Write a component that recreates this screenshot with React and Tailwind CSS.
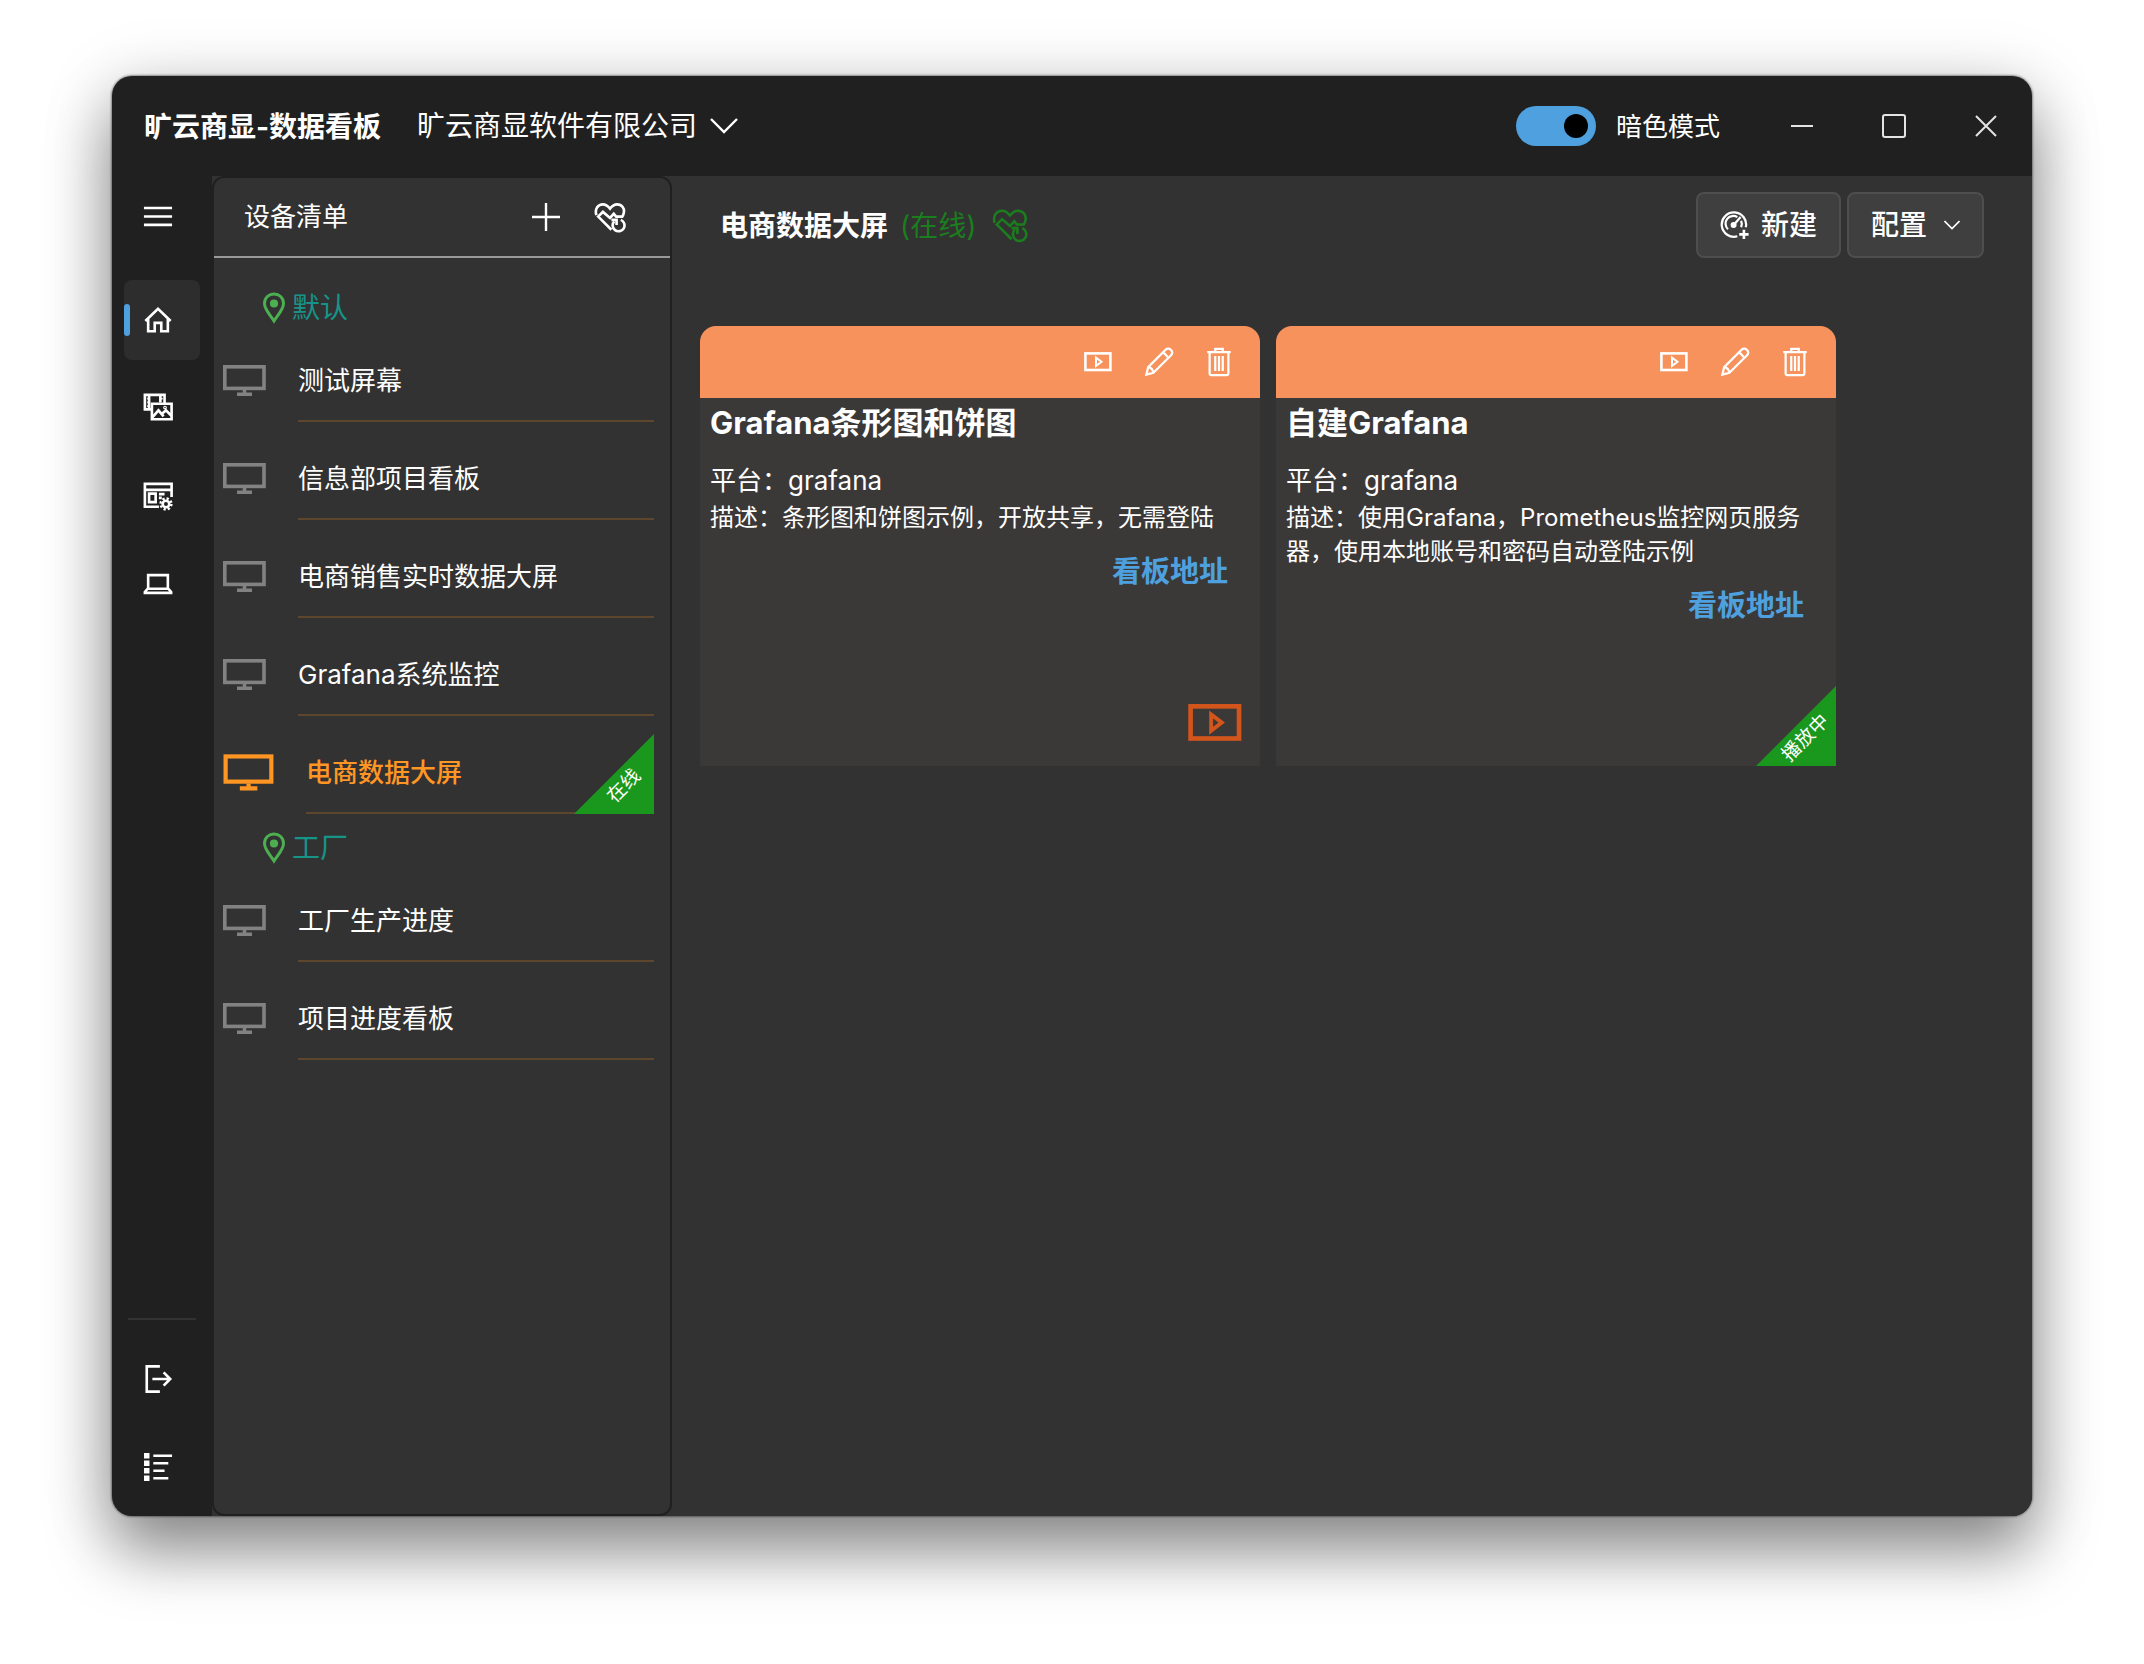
import React, { useState } from 'react';

const groups = [
    {
        name: '默认',
        devices: [
            { id: 1, name: '测试屏幕' },
            { id: 2, name: '信息部项目看板' },
            { id: 3, name: '电商销售实时数据大屏' },
            { id: 4, name: 'Grafana系统监控' },
            { id: 5, name: '电商数据大屏', online: true },
        ],
    },
    {
        name: '工厂',
        devices: [
            { id: 6, name: '工厂生产进度' },
            { id: 7, name: '项目进度看板' },
        ],
    },
];

const boards = [
    { id: 1, title: 'Grafana条形图和饼图', platform: 'grafana', desc: '条形图和饼图示例，开放共享，无需登陆', playing: false },
    { id: 2, title: '自建Grafana', platform: 'grafana', desc: '使用Grafana，Prometheus监控网页服务器，使用本地账号和密码自动登陆示例', playing: true },
];

const App = () => {
    const [dark, setDark] = useState(true);
    const [selected, setSelected] = useState(5);

    return (
        <div lang="zh-CN" className="min-h-screen w-full flex flex-col bg-white px-28 pt-[76px] pb-[148px] text-white font-['Inter','Noto_Sans_CJK_SC',sans-serif]">
            <div className="flex-1 flex flex-col rounded-[20px] overflow-hidden bg-[#202020] shadow-[0_0_2px_1px_rgba(0,0,0,0.4),0_36px_64px_rgba(0,0,0,0.4),0_10px_70px_rgba(0,0,0,0.18)]">
                <TitleBar dark={dark} onToggle={() => setDark(!dark)} />
                <div className="flex-1 flex">
                    <NavRail />
                    <DevicePanel selected={selected} onSelect={setSelected} />
                    <Dashboard />
                </div>
            </div>
        </div>
    );
};

const TitleBar = ({ dark, onToggle }) => (
    <header className="h-[100px] shrink-0 flex items-center pl-8">
        <h1 className="pt-[2px] text-[28px] leading-9 font-bold">旷云商显-数据看板</h1>
        <label className="ml-9 flex items-center gap-[10px]">
            <select aria-label="公司" className="appearance-none bg-transparent text-[28px] leading-9 outline-none">
                <option>旷云商显软件有限公司</option>
            </select>
            <svg className="w-8 h-8" viewBox="0 0 32 32" fill="none" stroke="currentColor" strokeWidth="2.4">
                <path d="M3 9 L16 22 L29 9" />
            </svg>
        </label>

        <div className="ml-auto flex items-center">
            <label className="flex items-center gap-5 text-[26px] leading-9">
                <input
                    type="checkbox"
                    role="switch"
                    checked={dark}
                    onChange={onToggle}
                    className="appearance-none w-20 h-10 p-2 rounded-full bg-[#4ea0df] flex justify-start checked:justify-end before:block before:w-6 before:h-6 before:rounded-full before:bg-black"
                />
                <span className="pt-[2px]">暗色模式</span>
            </label>
            <div className="ml-9 flex">
                <WindowButton label="最小化"><path d="M5 16 H27" /></WindowButton>
                <WindowButton label="最大化"><rect x="5" y="5" width="22" height="22" rx="2" /></WindowButton>
                <WindowButton label="关闭"><path d="M6 6 L26 26 M26 6 L6 26" /></WindowButton>
            </div>
        </div>
    </header>
);

const WindowButton = ({ label, children }) => (
    <button aria-label={label} className="w-[92px] h-[100px] flex items-center justify-center">
        <svg className="w-8 h-8" viewBox="0 0 32 32" fill="none" stroke="#e4e4e4" strokeWidth="2">{children}</svg>
    </button>
);

const NavRail = () => (
    <nav className="w-[100px] shrink-0 flex flex-col px-3 pb-[9px]">
        <NavButton label="菜单">
            <path d="M1 7.5 H31 M1 16.5 H31 M1 25.5 H31" />
        </NavButton>
        <div className="mt-6 flex flex-col gap-2">
            <NavButton label="首页" active>
                <path d="M2.5 17 L16 4 L29.5 17 M5.5 14.5 V28 H12.5 V19 H19.5 V28 H26.5 V14.5" />
            </NavButton>
            <NavButton label="素材">
                <path d="M9 17.5 H2 V2 H23 V11 M6.5 2 V17 M18.5 2 V10" />
                <path d="M4.5 6 H6 M4.5 10 H6 M4.5 14 H6 M19 6 H21" strokeWidth="2" />
                <path d="M9.5 11.5 H30.5 V28 H9.5 Z M10 26 L16.5 18.5 L22 25 M20 22.5 L24.5 18.5 L30 24" />
                <circle cx="23.5" cy="15.5" r="0.6" />
            </NavButton>
            <NavButton label="网页">
                <path d="M17 27.5 H2 V3 H30.5 V17 M2 9.5 H30 M6.5 13.5 H13.5 V22.5 H6.5 Z M17 14 H23 M17 18 H20" />
                <circle cx="24.5" cy="24.5" r="3.5" strokeWidth="2.8" />
                <circle cx="24.5" cy="24.5" r="5.8" strokeWidth="2.6" strokeDasharray="2.4 2.15" />
            </NavButton>
            <NavButton label="设备">
                <path d="M5.5 21 V6.5 H26.5 V21 M5 21 H27 L30 24.5 V25.5 H2 V24.5 Z" />
            </NavButton>
        </div>
        <div className="mt-auto flex flex-col">
            <hr className="mx-1 mb-[19px] border-0 h-[2px] bg-[#323232]" />
            <div className="flex flex-col gap-2">
                <NavButton label="退出">
                    <path d="M18 2.5 H4 V29.5 H18 M10 16 H29 M22 9 L29 16 L22 23" />
                </NavButton>
                <NavButton label="列表">
                    <path d="M11 4 H31 M11 12 H27 M11 20 H23 M11 28 H27" />
                    <path d="M2.5 2.5 H5.5 V5.5 H2.5 Z M2.5 10.5 H5.5 V13.5 H2.5 Z M2.5 18.5 H5.5 V21.5 H2.5 Z M2.5 26.5 H5.5 V29.5 H2.5 Z" />
                </NavButton>
            </div>
        </div>
    </nav>
);

const NavButton = ({ label, active, children }) => (
    <button
        aria-label={label}
        className={`h-20 w-[76px] flex items-center rounded-lg ${active ? 'bg-[#2d2d2d]' : ''}`}
    >
        <span className={`w-[6px] h-8 rounded-full ${active ? 'bg-[#4ea0df]' : ''}`} />
        <svg className="ml-[13px] w-[30px] h-[30px]" viewBox="0 0 32 32" fill="none" stroke="currentColor" strokeWidth="2.8">
            {children}
        </svg>
    </button>
);

const DevicePanel = ({ selected, onSelect }) => (
    <aside className="w-[460px] shrink-0 bg-[#323232]">
        <div className="h-full flex flex-col rounded-xl border-2 border-[#202020]">
            <div className="h-20 flex items-center pl-[30px] pr-11 border-b-2 border-[#999999]">
                <h2 className="text-[26px] leading-9">设备清单</h2>
                <button aria-label="添加" className="ml-auto">
                    <svg className="w-8 h-8" viewBox="0 0 32 32" stroke="currentColor" strokeWidth="2.4">
                        <path d="M16 2 V30 M2 16 H30" />
                    </svg>
                </button>
                <button aria-label="刷新状态" className="ml-8 pt-[2px]"><HeartIcon className="w-8 h-8" strokeWidth="2.8" /></button>
            </div>
            <div className="pt-4 pl-[6px] pr-4">
                {groups.map((group) => (
                    <section key={group.name}>
                        <h3 className="h-[66px] pt-[2px] flex items-center gap-[6px] pl-[42px] text-[28px] leading-9 text-[#179488]">
                            <PinIcon />
                            {group.name}
                        </h3>
                        <ul className="flex flex-col gap-4">
                            {group.devices.map((device) => (
                                <DeviceRow
                                    key={device.id}
                                    device={device}
                                    active={device.id === selected}
                                    onClick={() => onSelect(device.id)}
                                />
                            ))}
                        </ul>
                    </section>
                ))}
            </div>
        </div>
    </aside>
);

const DeviceRow = ({ device, active, onClick }) => (
    <li className="relative">
        <button onClick={onClick} className="w-full flex items-center gap-[30px] text-left text-[26px] leading-9">
            <svg
                className={`shrink-0 ${active ? 'w-14 h-14 text-[#ff9624]' : 'w-12 h-12 text-[#828282]'}`}
                viewBox="0 0 48 48"
                fill="none"
                stroke="currentColor"
                strokeWidth="3.6"
            >
                <rect x="4.8" y="9.8" width="39.2" height="21.6" />
                <path d="M24.5 33 V36 M17 37.2 H32" />
            </svg>
            <span className={`flex-1 h-[82px] pt-[2px] flex items-center border-b-2 border-[#5c472c] ${active ? 'text-[#ff9624] font-medium' : ''}`}>
                {device.name}
            </span>
        </button>
        {device.online && <Ribbon text="在线" />}
    </li>
);

// green corner with diagonal text
const Ribbon = ({ text }) => (
    <div className="absolute right-0 bottom-0 w-20 h-20 pl-5 pt-6 flex items-center justify-center">
        <svg className="absolute inset-0 w-full h-full" viewBox="0 0 80 80" fill="#19981d">
            <path d="M80 0 V80 H0 Z" />
        </svg>
        <span className="relative -rotate-45 text-[19px] leading-5 whitespace-nowrap">{text}</span>
    </div>
);

const Dashboard = () => (
    <main className="flex-1 bg-[#323232] pl-7 pr-12 pt-4">
        <div className="h-[66px] flex items-center pl-5">
            <h2 className="pt-[2px] text-[28px] leading-9 font-bold">电商数据大屏</h2>
            <span className="ml-3 pt-[2px] text-[28px] leading-9 text-[#1b7d1e]">(在线)</span>
            <button aria-label="刷新状态" className="ml-4 pt-[2px] text-[#1b7d1e]"><HeartIcon className="w-9 h-9" strokeWidth="2.4" /></button>
            <div className="ml-auto flex gap-[6px]">
                <button className="h-[66px] px-[22px] flex items-center gap-[11px] rounded-lg border-2 border-[#4e4e4e] bg-[#3f3f3f] text-[28px] leading-9 font-medium">
                    <GaugeIcon />
                    新建
                </button>
                <button className="h-[66px] px-[22px] flex items-center gap-[17px] rounded-lg border-2 border-[#4e4e4e] bg-[#3f3f3f] text-[28px] leading-9 font-medium">
                    配置
                    <svg className="w-4 h-4" viewBox="0 0 16 16" fill="none" stroke="currentColor" strokeWidth="1.6">
                        <path d="M0.5 4 L8 11.5 L15.5 4" />
                    </svg>
                </button>
            </div>
        </div>
        <div className="mt-[68px] flex flex-wrap gap-4">
            {boards.map((board) => <BoardCard key={board.id} board={board} />)}
        </div>
    </main>
);

const BoardCard = ({ board }) => (
    <article className="relative w-[560px] min-h-[440px] flex flex-col rounded-t-2xl overflow-hidden bg-[#3b3937]">
        <div className="h-[72px] flex items-center justify-end gap-[30px] pr-[26px] bg-[#f7925c]">
            <button aria-label="播放"><PlayIcon className="w-8 h-8" strokeWidth="2.6" /></button>
            <button aria-label="编辑"><PencilIcon /></button>
            <button aria-label="删除"><TrashIcon /></button>
        </div>
        <div className="flex flex-col px-[10px]">
            <h3 className="text-[31px] leading-[50px] font-bold">{board.title}</h3>
            <p className="mt-[15px] text-[26px] leading-9">平台：{board.platform}</p>
            <p className="mt-[2px] text-[24px] leading-[34px]">描述：{board.desc}</p>
            <a href="#board" className="self-end mt-[17px] mr-[22px] text-[29px] leading-10 font-bold text-[#4ea0df]">看板地址</a>
        </div>
        {board.playing ? (
            <Ribbon text="播放中" />
        ) : (
            <button aria-label="开始播放" className="mt-auto self-end mr-[14px] mb-3 text-[#d2551c]">
                <PlayIcon className="w-[62px] h-[62px]" strokeWidth="2.4" />
            </button>
        )}
    </article>
);

const PlayIcon = ({ className, strokeWidth }) => (
    <svg className={className} viewBox="0 0 32 32" fill="none" stroke="currentColor" strokeWidth={strokeWidth}>
        <rect x="3.4" y="7.4" width="25" height="16.6" />
        <path d="M14 11.6 V20 L19.5 15.8 Z" strokeWidth="2" />
    </svg>
);

const PencilIcon = () => (
    <svg className="w-[30px] h-[30px]" viewBox="0 0 32 32" fill="none" stroke="currentColor" strokeWidth="2.4">
        <path d="M2.5 29.5 L4.5 21.5 L23 3 C24.6 1.4 27 1.4 28.6 3 C30.4 4.8 30.4 7.2 28.6 9 L10 27.5 Z M20.5 5.5 L26 11.5 M4.5 21.5 C7.5 22 9.5 24.5 10 27.5" />
    </svg>
);

const TrashIcon = () => (
    <svg className="w-[30px] h-[30px]" viewBox="0 0 32 32" fill="none" stroke="currentColor" strokeWidth="2.4">
        <path d="M3.5 5.5 H28.5 M12 5 V2 H20 V5 M6 6 V28 C6 29.5 6.5 30 8 30 H24 C25.5 30 26 29.5 26 28 V6" />
        <path d="M12 9.5 V25.5 M16 9.5 V25.5 M20 9.5 V25.5" />
    </svg>
);

const PinIcon = () => (
    <svg className="w-6 h-8" viewBox="0 0 24 32" fill="none" stroke="#4caf50" strokeWidth="3">
        <path d="M12 29 C8 22.5 2.5 17.5 2.5 11.5 C2.5 5.5 7 2 12 2 C17 2 21.5 5.5 21.5 11.5 C21.5 17.5 16 22.5 12 29 Z" />
        <circle cx="12" cy="11.5" r="2.6" fill="#4caf50" />
    </svg>
);

const HeartIcon = ({ className, strokeWidth }) => (
    <svg className={className} viewBox="0 0 34 34" fill="none" stroke="currentColor" strokeWidth={strokeWidth}>
        <path d="M2.5 14 C0.5 7 4.5 2.5 9.5 2.5 C13 2.5 15 4.5 17 7 C19 4.5 21 2.5 24.5 2.5 C29.5 2.5 33 7 31.5 12 C31.3 13.5 30.8 14.5 30 15.5 H23.5 L21 12.5 L17 17 L9.5 10.5 L4.5 15.5 L18.5 29.5" />
        <path d="M28.5 19 A6.3 6.3 0 1 1 21.5 20.5" />
        <path d="M18.5 19 H24 V24.5" />
    </svg>
);

const GaugeIcon = () => (
    <svg className="w-[30px] h-[30px]" viewBox="0 0 32 32" fill="none" stroke="currentColor" strokeWidth="2.4">
        <path d="M18.5 28 A13 13 0 1 1 27.5 18.5" />
        <path d="M8.5 20.5 A8.2 8.2 0 0 1 18.5 7.6 M22.5 11.5 A8.2 8.2 0 0 1 22.5 18.5" />
        <path d="M15 15.5 L22 7.5" />
        <circle cx="14.5" cy="16" r="2" fill="currentColor" />
        <path d="M25.5 21 V31 M20.5 26 H30.5" strokeWidth="2.8" />
    </svg>
);

export default App;
